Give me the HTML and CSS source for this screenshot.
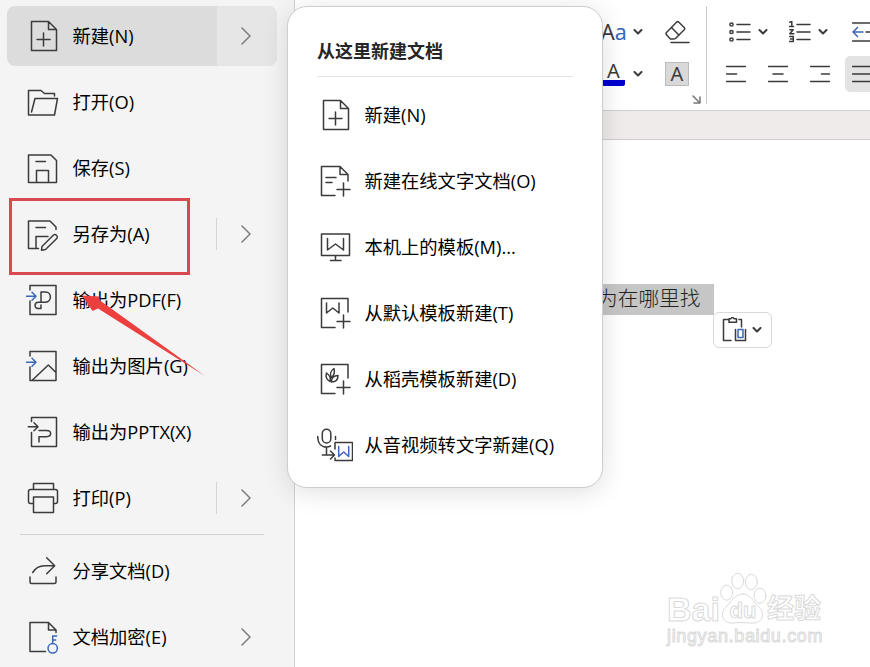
FILE: index.html
```html
<!DOCTYPE html>
<html lang="zh-CN">
<head>
  <meta charset="UTF-8">
  <meta name="viewport" content="width=device-width, initial-scale=1">
  <title>文件菜单</title>
  <link rel="stylesheet" href="styles.css">
</head>
<body>
  <!-- 文件菜单 -->
  <nav class="sidebar">
    <a class="item active">
      <svg class="icon" viewBox="0 0 36 36"><path d="M6.5 3.5h17l8 8v21h-25zM23.5 3.5v8h8M18.5 15v13M12 21.5h13"/></svg>
      <span class="label">新建(N)</span>
      <span class="more"><svg class="arrow" viewBox="0 0 10 18"><path d="M1 1l8 8-8 8"/></svg></span>
    </a>
    <a class="item">
      <svg class="icon" viewBox="0 0 36 36"><path d="M29.5 12V9.5H19.5l-3.5-3H3.5V31h26l3-16.5H10L6.5 28"/></svg>
      <span class="label">打开(O)</span>
    </a>
    <a class="item">
      <svg class="icon" viewBox="0 0 36 36"><path d="M3.5 5h22.500l5.500 5.500v22h-28zM11 11.500h9.500M11.500 32.500v-12h12v12"/></svg>
      <span class="label">保存(S)</span>
    </a>
    <a class="item">
      <svg class="icon" viewBox="0 0 36 36"><path d="M31 13.500v-2.500l-6-6H3.500v27.500h10M11 11.500h9.500M11 32.500v-12h12M17 30.500L28.500 19q1.500-1.200 3 .2t.5 3L20.500 33.500l-4 .7z"/></svg>
      <span class="label">另存为(A)</span>
      <span class="more split"><svg class="arrow" viewBox="0 0 10 18"><path d="M1 1l8 8-8 8"/></svg></span>
    </a>
    <a class="item">
      <svg class="icon" viewBox="0 0 36 36"><path d="M5 8V3.500h26v29H5V19M16 19V10h4.500c6.500 0 6.500 10.200 0 10.200h-7c-4.500 0-4.500 6.300-.5 6.300h3v-3.500"/><path class="blue" d="M1.500 14.300H11M7 10.300l4 4-4 4"/></svg>
      <span class="label">输出为PDF(F)</span>
    </a>
    <a class="item">
      <svg class="icon" viewBox="0 0 36 36"><path d="M5 8V3.500h26v29H5V19M7.500 32l15.800-15 7.700 7.500"/><path class="blue" d="M1.500 14.300H11M7 10.300l4 4-4 4"/></svg>
      <span class="label">输出为图片(G)</span>
    </a>
    <a class="item">
      <svg class="icon" viewBox="0 0 36 36"><path d="M6.500 7.500v-4h25v29h-25V18.500M3.300 12.700h9.500M9 8.700l4 4-4 4M14 16.500h7.500c5.500 0 5.500 6.200 0 6.200H14V28"/></svg>
      <span class="label">输出为PPTX(X)</span>
    </a>
    <a class="item">
      <svg class="icon" viewBox="0 0 36 36"><path d="M8.500 9.500v-6h20v6M8.500 23.500h-3q-2 0-2-2v-10q0-2 2-2h25q2 0 2 2v10q0 2-2 2h-2M8.500 17h20v15.500h-20z"/></svg>
      <span class="label">打印(P)</span>
      <span class="more split"><svg class="arrow" viewBox="0 0 10 18"><path d="M1 1l8 8-8 8"/></svg></span>
    </a>
    <hr class="divider">
    <a class="item">
      <svg class="icon" viewBox="0 0 36 36"><path d="M5 24v5q0 1.500 1.500 1.500h23q1.500 0 1.500-1.500v-5M7.700 19.500c3-5 7-6.800 12-6.800h9.800M21.700 4.700l8 8-8 8"/></svg>
      <span class="label">分享文档(D)</span>
    </a>
    <a class="item">
      <svg class="icon" viewBox="0 0 36 36"><path d="M20.500 32.500H5v-29h18.500l7.500 7.500v2.500M23.500 3.500v7.500h7.500"/><g class="blue"><circle cx="27.700" cy="29.300" r="4.700"/><path d="M27.700 24.600V17h4M27.700 21h3"/></g></svg>
      <span class="label">文档加密(E)</span>
      <span class="more"><svg class="arrow" viewBox="0 0 10 18"><path d="M1 1l8 8-8 8"/></svg></span>
    </a>
  </nav>

  <main class="editor">
    <!-- 功能区 -->
    <div class="ribbon">
      <div class="group font-group">
        <div class="tools">
          <span class="tool case">A<span>a</span></span>
          <svg class="chev" viewBox="0 0 10 6"><path d="M1.500 1L5 4.500 8.500 1"/></svg>
          <svg class="eraser" viewBox="0 0 25 24"><path d="M5 18.500l-3.500-3.800q-1-1.200 0-2.200L11.500 2.200q1.200-1.200 2.400 0l5.300 5.300q1 1.200 0 2.300L10.500 18.500q-.8.600-1.600.6H6q-.6 0-1-.6zM6.500 7.500l7.500 7.700M6 22.500h18"/></svg>
        </div>
        <div class="tools">
          <span class="tool color">A</span>
          <svg class="chev" viewBox="0 0 10 6"><path d="M1.500 1L5 4.500 8.500 1"/></svg>
          <span class="tool shade">A</span>
        </div>
        <svg class="launcher" viewBox="0 0 9 9"><path d="M1 1l6.500 6.500M8 2v6H2"/></svg>
      </div>
      <div class="group para-group">
        <div class="tools">
          <svg class="list" viewBox="0 0 22 22"><path d="M8 3.500h13M8 11h13M8 18.500h13"/><circle cx="2.500" cy="3.500" r="1.600"/><circle cx="2.500" cy="11" r="1.600"/><circle cx="2.500" cy="18.500" r="1.600"/></svg>
          <svg class="chev" viewBox="0 0 10 6"><path d="M1.500 1L5 4.500 8.500 1"/></svg>
          <svg class="list numbered" viewBox="0 0 22 22"><path d="M8 3.500h13M8 11h13M8 18.500h13M.8 1.300l2-.8v5M.5 5.500h4M.8 8.700h3.400L.8 12.800h4M.8 15.500h3.500v5H.5M1.500 18h2.500"/></svg>
          <svg class="chev" viewBox="0 0 10 6"><path d="M1.500 1L5 4.500 8.500 1"/></svg>
          <svg class="indent" viewBox="0 0 20 22"><path d="M.5 2h20M14 11h7M.5 20h20"/><path class="blue" d="M11 11H1M5.500 6.500L1 11l4.500 4.500"/></svg>
        </div>
        <div class="tools align">
          <svg viewBox="0 0 20 18"><path d="M.5 1.500h19M.5 9h10M.5 16.500h19"/></svg>
          <svg viewBox="0 0 20 18"><path d="M.5 1.500h19M5 9h10M.5 16.500h19"/></svg>
          <svg viewBox="0 0 20 18"><path d="M.5 1.500h19M11.500 9h8M.5 16.500h19"/></svg>
          <span class="pressed"><svg viewBox="0 0 20 18"><path d="M.5 1.500h19M.5 9h19M.5 16.500h19"/></svg></span>
        </div>
      </div>
    </div>
    <div class="gap"></div>
    <div class="page">
      <p class="selected">为在哪里找</p>
      <button class="paste">
        <svg class="clip" viewBox="0 0 26 26"><path d="M8 2.500H2.500v21H10M18 2.500h2.500V10M8 1.700h2Q11.500-.7 13 1.700h2.500v3.500H8z"/><path d="M14.500 12.500v11h10v-11"/><path class="blue" d="M17 12.500h5v8h-5z"/></svg>
        <svg class="chev" viewBox="0 0 10 6"><path d="M1.500 1L5 4.500 8.500 1"/></svg>
      </button>
    </div>
  </main>

  <!-- 新建子菜单 -->
  <section class="popup">
    <h2>从这里新建文档</h2>
    <a class="item">
      <svg class="icon" viewBox="0 0 36 36"><path d="M6.500 3.500h17l8 8v21h-25zM23.500 3.500v8h8M18.500 15v13M12 21.500h13"/></svg>
      <span class="label">新建(N)</span>
    </a>
    <a class="item">
      <svg class="icon" viewBox="0 0 36 36"><path d="M18 32.500H4.500v-29h18.500l8 8V18M23 3.500v8h8M9 14.500h10M9 19.500h6M26.500 20v13M20 26.500h13"/></svg>
      <span class="label">新建在线文字文档(O)</span>
    </a>
    <a class="item">
      <svg class="icon" viewBox="0 0 36 36"><path d="M4.500 5h28v21.500h-28zM18.500 26.500v5M13.500 31.500h10.500M10.500 9.500v11.500l8-6 8 6V9.500"/></svg>
      <span class="label">本机上的模板(M)...</span>
    </a>
    <a class="item">
      <svg class="icon" viewBox="0 0 36 36"><path d="M18 32.500H4.500v-29h26.500V17M9.500 8v10l6.300-5 6.200 5V8M26.500 20v13M20 26.500h13"/></svg>
      <span class="label">从默认模板新建(T)</span>
    </a>
    <a class="item">
      <svg class="icon" viewBox="0 0 36 36"><path d="M18 32.500H4.500v-29h26.500V17M26.500 20v13M20 26.500h13M14.500 16.500c-2-3.500-.5-7 2.500-9 1 4 .5 6.500-2.500 9zM13 20.500c-4-2-4.500-5-3.500-8.500 3 2 4.500 5 3.500 8.500zM14.500 21c-.5-4 2.500-6.500 6.500-6.500 0 4-2.500 6.500-6.500 6.500z"/></svg>
      <span class="label">从稻壳模板新建(D)</span>
    </a>
    <a class="item">
      <svg class="icon" viewBox="0 0 36 36"><rect x="5.300" y="2.300" width="8.500" height="13.700" rx="4.250"/><path d="M.7 9.500c0 6.500 3.500 10.500 8.800 10.500 1.500 0 3-.4 4-1M18.500 9.500v3M9.500 20v8M5.300 28H17M13.500 24l4 4-4 4M18 22v-6.500h17.500V33.500H18V31"/><path class="blue" d="M21.700 19.500v10l5-4.500 5 4.500v-10"/></svg>
      <span class="label">从音视频转文字新建(Q)</span>
    </a>
  </section>

  <!-- 标注 -->
  <div class="mark"></div>
  <svg class="pointer" viewBox="0 0 124 82"><path d="M1 .5L18 1.500l1 4L124 81 17 13.500 11.500 16z"/></svg>

  <!-- 水印 -->
  <div class="watermark">
    <div class="brand">
      <span class="bai">Bai</span>
      <svg class="paw" viewBox="0 0 46 52"><ellipse cx="6.700" cy="19.700" rx="6" ry="7.500"/><ellipse cx="17.700" cy="8" rx="6" ry="7.700"/><ellipse cx="31.300" cy="9" rx="6" ry="7.700"/><ellipse cx="40" cy="22.700" rx="6" ry="7.500"/><path d="M23 21c8 0 10 8 15 12 8 7 5 17-5 17-6 0-14-1-20 0-10 1-14-9-7-16C11 29 15 21 23 21z"/><text x="23" y="45" text-anchor="middle">du</text></svg>
      <span class="jingyan">经验</span>
    </div>
    <div class="site">jingyan.baidu.com</div>
  </div>
</body>
</html>
```

FILE: styles.css
```css
* {
  box-sizing: border-box;
}
body {
  margin: 0;
  width: 870px;
  height: 667px;
  display: flex;
  position: relative;
  overflow: hidden;
  background: #fff;
  color: #000;
  font-family: "Open Sans", "Noto Sans CJK SC", sans-serif;
  font-size: 18px;
}
svg {
  display: block;
  flex: none;
  fill: none;
  stroke: #3b3b3b;
  stroke-width: 1.5;
  stroke-linecap: round;
  stroke-linejoin: round;
}
.blue {
  stroke: #3a67b8;
}

/* 左侧菜单 */
.sidebar {
  width: 295px;
  flex: none;
  padding: 6px 17px 0 7px;
  background: #f4f4f4;
  border-right: 1px solid #d2d2d2;
}
.item {
  display: flex;
  align-items: center;
  height: 60px;
  margin-bottom: 6px;
}
.sidebar .item {
  padding-left: 18px;
  border-radius: 8px;
}
.item.active {
  background: linear-gradient(90deg, #dcdcdc 210px, #e6e6e6 210px);
}
.icon {
  width: 36px;
  height: 36px;
  margin-right: 11.5px;
}
.label {
  font-size: 18.3px;
  white-space: nowrap;
  line-height: 24px;
}
.more {
  margin-left: auto;
  width: 61px;
  height: 32px;
  padding-left: 25px;
  display: flex;
  align-items: center;
}
.split {
  padding-left: 24px;
  border-left: 1px solid #d4d4d4;
}
.arrow {
  width: 10px;
  height: 18px;
  stroke: #7c7c7c;
}
.divider {
  height: 1px;
  margin: 0 13px 6px 13px;
  border: 0;
  background: #d2d2d2;
}

/* 编辑区 */
.editor {
  flex: 1;
  min-width: 0;
  display: flex;
  flex-direction: column;
}
.ribbon {
  height: 111px;
  display: flex;
  padding-top: 6px;
  border-bottom: 1px solid #d0cecd;
}
.group {
  display: flex;
  flex-direction: column;
  flex-shrink: 0;
}
.tools {
  display: flex;
  flex-shrink: 0;
  align-items: center;
  height: 42px;
}
.chev {
  width: 10px;
  height: 6px;
  stroke-width: 2;
}
.font-group {
  position: relative;
  width: 412px;
  height: 98px;
  padding-top: 5px;
  padding-right: 17px;
  align-items: flex-end;
  border-right: 1px solid #c9c9c9;
}
.font-group .chev {
  margin-right: 22px;
}
.tool {
  color: #3b3b3b;
  font-family: "Noto Sans", sans-serif;
  font-size: 20px;
  line-height: 24px;
}
.case {
  margin-right: 6px;
  width: 26px;
  white-space: nowrap;
  font-size: 21.5px;
}
.case span {
  color: #3a67b8;
}
.tools .eraser {
  margin-right: -1px;
}
.color {
  width: 23px;
  height: 24px;
  margin-right: 8px;
  text-align: center;
  line-height: 17px;
  border-bottom: 6px solid #0000d0;
  border-radius: 2px;
}
.shade {
  width: 24px;
  height: 24px;
  text-align: center;
  line-height: 22px;
  background: #d9d9d9;
  border: 1px solid #bcbcbc;
}
.eraser {
  width: 25px;
  height: 24px;
}
.launcher {
  position: absolute;
  right: 5px;
  bottom: 0;
  width: 9px;
  height: 9px;
  stroke: #777;
}
.para-group {
  padding: 5px 0 0 19px;
}
.list {
  width: 22px;
  height: 22px;
  margin: 0 7px 0 3px;
}
.numbered {
  margin-left: 21px;
}
.indent {
  width: 20px;
  height: 22px;
  margin-left: 24px;
}
.align {
  gap: 22px;
}
.align svg {
  width: 20px;
  height: 18px;
}
.pressed {
  margin-left: -7px;
  padding: 9px 7px;
  background: #e3e3e3;
  border-radius: 5px;
}
.gap {
  height: 29px;
  background: #eeebea;
  border-bottom: 1px solid #cfcdcc;
}
.page {
  flex: 1;
  padding: 144px 0 0 293px;
  background: #fff;
}
.selected {
  margin: 0;
  width: 126px;
  height: 31px;
  padding-left: 9px;
  background: #c6c6c6;
  color: #222;
  font-family: "Liberation Serif", "Noto Sans CJK SC", serif;
  font-weight: 300;
  font-size: 20.7px;
  line-height: 31px;
}
.paste {
  display: flex;
  align-items: center;
  width: 59px;
  height: 36px;
  margin: -3px 0 0 125px;
  padding: 0 0 0 7px;
  background: #fff;
  border: 1px solid #d9d9d9;
  border-radius: 6px;
}
.clip {
  width: 26px;
  height: 26px;
  margin-right: 5px;
}

/* 弹出菜单 */
.popup {
  position: absolute;
  left: 287px;
  top: 6px;
  width: 316px;
  height: 482px;
  padding: 21px 29px 0;
  background: #fff;
  border: 1px solid #cdcdcd;
  border-radius: 20px;
  box-shadow: 0 4px 26px rgba(0, 0, 0, 0.13);
}
.popup h2 {
  height: 49px;
  margin: 0 0 8px;
  border-bottom: 1px solid #e4e4e4;
  color: #262626;
  font-size: 18px;
  font-weight: 700;
  line-height: 46px;
}

/* 红框和箭头 */
.mark {
  position: absolute;
  left: 9px;
  top: 198px;
  width: 181px;
  height: 77px;
  border: 3px solid #d94a4f;
}
.pointer {
  position: absolute;
  left: 81px;
  top: 295px;
  width: 124px;
  height: 82px;
  fill: #ee3f3f;
  stroke: none;
}

/* 水印 */
.watermark {
  position: absolute;
  left: 667px;
  top: 573px;
  width: 160px;
  color: #fff;
  font-family: "Liberation Sans", "Noto Sans CJK SC", sans-serif;
  font-weight: 700;
  -webkit-text-stroke: 1px #dadada;
}
.brand {
  display: flex;
  height: 53px;
}
.bai {
  width: 53px;
  font-size: 34px;
  line-height: 34px;
  padding-top: 19px;
}
.paw {
  width: 46px;
  height: 52px;
  overflow: visible;
  fill: #fff;
  stroke: #dadada;
  stroke-width: 1;
}
.paw text {
  font-size: 22px;
}
.jingyan {
  padding: 22px 0 0 1px;
  font-size: 27px;
  line-height: 28px;
  white-space: nowrap;
}
.site {
  font-size: 18px;
  letter-spacing: 0.65px;
  font-weight: 400;
  line-height: 20px;
}
```
